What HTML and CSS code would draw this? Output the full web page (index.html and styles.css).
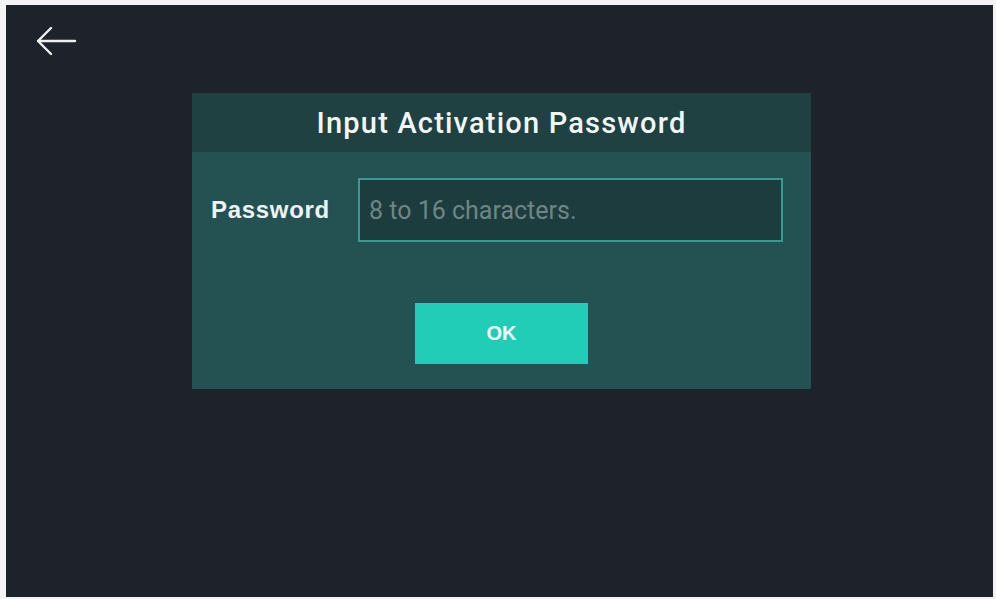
FILE: index.html
```html
<!DOCTYPE html>
<html lang="en">
<head>
  <meta charset="UTF-8" />
  <meta name="viewport" content="width=device-width, initial-scale=1.0" />
  <title>Input Activation Password</title>
  <link rel="stylesheet" href="styles.css">
</head>
<body>
  <div class="screen">
    <button class="back" aria-label="Back">
      <svg width="44" height="32" viewBox="0 0 44 32">
        <path d="M41 16 H4 M17 3 L4 16 L17 29" fill="none" stroke="#eef0f0" stroke-width="2.4" stroke-linecap="round" stroke-linejoin="round"/>
      </svg>
    </button>

    <div class="dialog">
      <div class="dialog-title">Input Activation Password</div>
      <div class="dialog-body">
        <div class="field">
          <label for="password">Password</label>
          <input type="password" id="password" placeholder="8 to 16 characters." />
        </div>
        <button class="ok">OK</button>
      </div>
    </div>
  </div>
</body>
</html>
```

FILE: styles.css
```css
body {
  margin: 0;
  background: #f4f4f4;
  font-family: 'Liberation Sans', Arial, sans-serif;
}

.screen {
  margin: 5px 3px 2px 6px;
  height: 592px;
  background: #1d222b;
  position: relative;
  display: flex;
  flex-direction: column;
  align-items: flex-start;
}

.back {
  position: absolute;
  left: 28px;
  top: 20px;
  background: none;
  border: none;
  padding: 0;
  cursor: pointer;
}

.back svg {
  display: block;
}

.dialog {
  margin: 88px 0 0 186px;
  width: 619px;
  height: 296px;
  display: flex;
  flex-direction: column;
  background: #245253;
}

.dialog-title {
  height: 59px;
  display: flex;
  align-items: center;
  justify-content: center;
  background: #1f4142;
  color: #f2f5f5;
  font-family: Roboto, 'Liberation Sans', sans-serif;
  font-weight: 500;
  font-size: 29px;
  letter-spacing: 1.2px;
}

.dialog-body {
  flex: 1;
  display: flex;
  flex-direction: column;
  align-items: center;
  padding-top: 26px;
}

.field {
  width: 100%;
  box-sizing: border-box;
  padding: 0 28px 0 19px;
  display: flex;
  align-items: center;
  gap: 28px;
}

.field label {
  color: #eef3f3;
  font-size: 24px;
  font-weight: bold;
  letter-spacing: 0.7px;
  width: 119px;
  white-space: nowrap;
}

.field input {
  flex: 1;
  height: 64px;
  box-sizing: border-box;
  background: #1c3c3d;
  border: 2px solid #3b9a8f;
  padding: 0 9px;
  color: #dfe8e8;
  font-family: Roboto, 'Liberation Sans', sans-serif;
  font-size: 25px;
  outline: none;
}

.field input::placeholder {
  color: #6d8786;
}

.ok {
  margin-top: 61px;
  width: 173px;
  height: 61px;
  border: none;
  background: #22cdb8;
  color: #f4fbfa;
  font-family: 'Liberation Sans', Arial, sans-serif;
  font-size: 20px;
  font-weight: bold;
  cursor: pointer;
}
```
